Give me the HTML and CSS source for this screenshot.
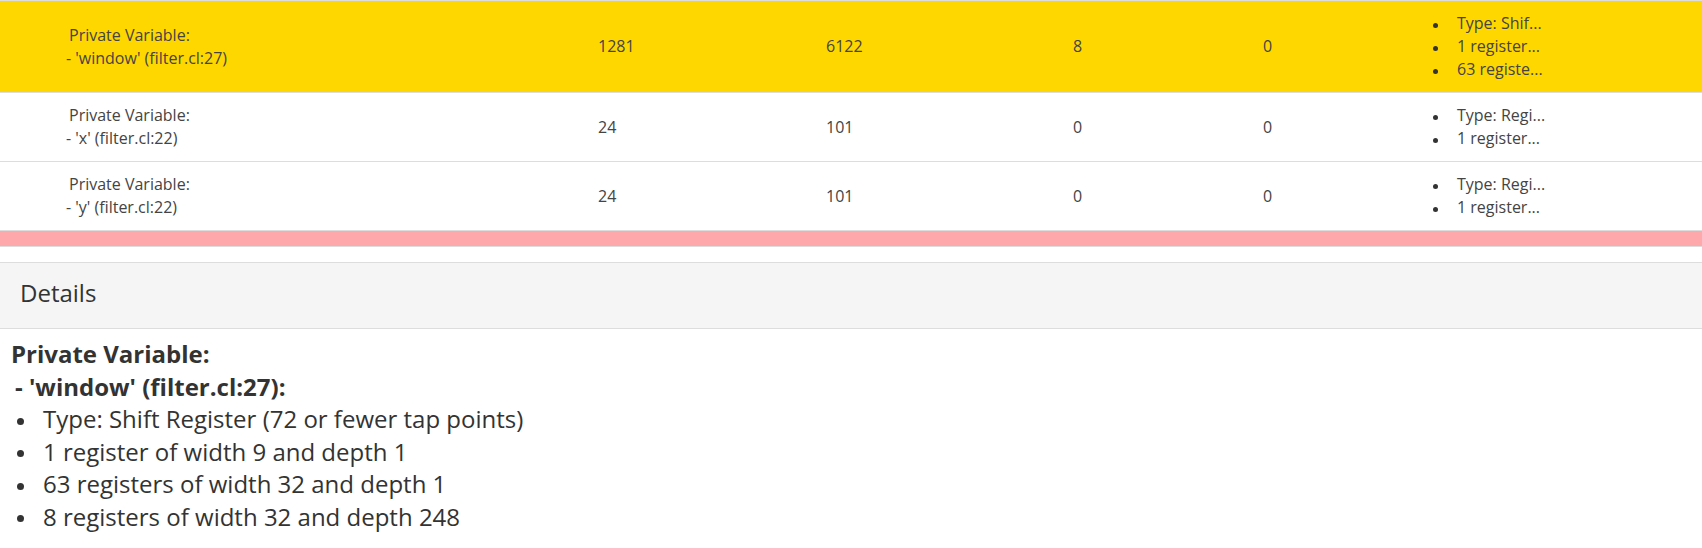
FILE: index.html
```html
<!DOCTYPE html>
<html lang="en">
<head>
<meta charset="utf-8">
<title>Private Variables</title>
<link rel="stylesheet" href="styles.css">
</head>
<body>
<div class="table-wrap">
  <div class="row row-selected">
    <div class="cell cell-name"><span class="name-l1">Private Variable:</span><span class="name-l2">- 'window' (filter.cl:27)</span></div>
    <div class="cell">1281</div>
    <div class="cell">6122</div>
    <div class="cell">8</div>
    <div class="cell">0</div>
    <div class="cell cell-list">
      <ul class="mini-list">
        <li>Type: Shif...</li>
        <li>1 register...</li>
        <li>63 registe...</li>
      </ul>
    </div>
  </div>
  <div class="row">
    <div class="cell cell-name"><span class="name-l1">Private Variable:</span><span class="name-l2">- 'x' (filter.cl:22)</span></div>
    <div class="cell">24</div>
    <div class="cell">101</div>
    <div class="cell">0</div>
    <div class="cell">0</div>
    <div class="cell cell-list">
      <ul class="mini-list">
        <li>Type: Regi...</li>
        <li>1 register...</li>
      </ul>
    </div>
  </div>
  <div class="row">
    <div class="cell cell-name"><span class="name-l1">Private Variable:</span><span class="name-l2">- 'y' (filter.cl:22)</span></div>
    <div class="cell">24</div>
    <div class="cell">101</div>
    <div class="cell">0</div>
    <div class="cell">0</div>
    <div class="cell cell-list">
      <ul class="mini-list">
        <li>Type: Regi...</li>
        <li>1 register...</li>
      </ul>
    </div>
  </div>
  <div class="row row-warn"></div>
</div>

<div class="panel">
  <div class="panel-heading">Details</div>
  <div class="panel-body">
    <div class="detail-title">Private Variable:</div>
    <div class="detail-title detail-sub">- 'window' (filter.cl:27):</div>
    <ul class="detail-list">
      <li>Type: Shift Register (72 or fewer tap points)</li>
      <li>1 register of width 9 and depth 1</li>
      <li>63 registers of width 32 and depth 1</li>
      <li>8 registers of width 32 and depth 248</li>
    </ul>
  </div>
</div>
</body>
</html>
```

FILE: styles.css
```css
* {
  box-sizing: border-box;
}

html, body {
  margin: 0;
  padding: 0;
  background: #ffffff;
}

body {
  font-family: "Open Sans", "Noto Sans", "Liberation Sans", sans-serif;
  color: #333333;
}

.table-wrap {
  height: 247px;
  overflow: hidden;
  border-bottom: 1px solid #dddddd;
}

.row {
  display: grid;
  grid-template-columns: 590px 228px 247px 190px 170px 1fr;
  align-items: center;
  border-top: 1px solid #dddddd;
  background: #ffffff;
  font-size: 16px;
  line-height: 23px;
  color: #444444;
}

.row-selected {
  background: #ffd700;
}

.row-warn {
  background: #ffa8ab;
  height: 69px;
}

.cell {
  padding: 11px 8px;
}

.cell-name {
  padding-left: 66px;
}

.name-l1,
.name-l2 {
  display: block;
}

.name-l1 {
  padding-left: 3px;
}

.mini-list {
  list-style: none;
  margin: 0;
  padding: 0;
}

.mini-list li {
  display: flex;
  align-items: center;
}

.mini-list li::before {
  content: "";
  width: 5px;
  height: 5px;
  border-radius: 50%;
  background: #333333;
  margin-top: 4px;
  margin-right: 19px;
  flex: none;
}

.panel {
  margin-top: 15px;
}

.panel-heading {
  background: #f5f5f5;
  border-top: 1px solid #dddddd;
  border-bottom: 1px solid #dddddd;
  padding: 14px 20px 19px;
  font-size: 24px;
  line-height: 32px;
  color: #333333;
}

.panel-body {
  padding: 9px 11px 12px;
  font-size: 24px;
  line-height: 32.5px;
  color: #333333;
}

.detail-title {
  font-weight: 700;
}

.detail-sub {
  padding-left: 4px;
}

.detail-list {
  list-style: none;
  margin: 0;
  padding: 0;
}

.detail-list li {
  display: flex;
  align-items: center;
}

.detail-list li::before {
  content: "";
  width: 7px;
  height: 7px;
  border-radius: 50%;
  background: #333333;
  margin-left: 6px;
  margin-right: 19px;
  margin-top: 4px;
  flex: none;
}
```
